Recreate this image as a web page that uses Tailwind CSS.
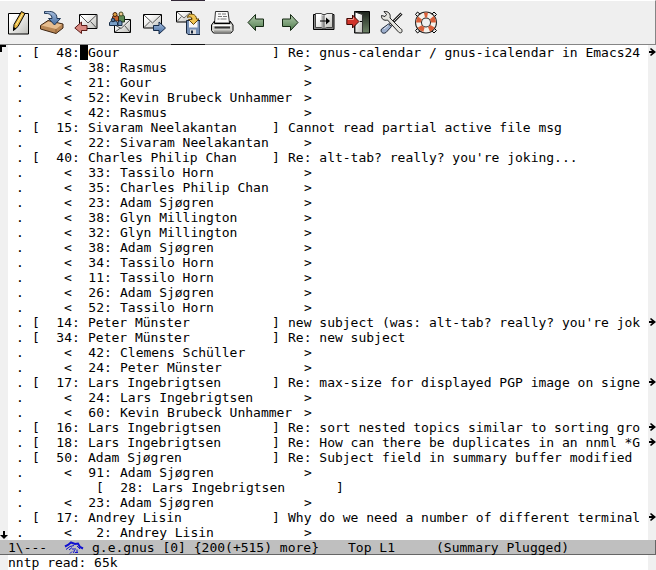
<!DOCTYPE html>
<html lang="en">
<head>
<meta charset="utf-8">
<title>Gnus Summary</title>
<script src="https://cdn.jsdelivr.net/npm/@tailwindcss/browser@4"></script>
</head>
<body class="min-h-screen flex flex-col bg-white text-black text-[13px] leading-[15px] font-['DejaVu_Sans_Mono','Liberation_Mono',monospace] overflow-hidden">

<svg class="absolute size-0" aria-hidden="true">
  <defs>
    <linearGradient id="paper" x1="0" y1="0" x2="1" y2="1"><stop offset="0.2" stop-color="#fff"/><stop offset="1" stop-color="#bdbdb8"/></linearGradient>
    <linearGradient id="green" x1="0" y1="0" x2="0" y2="1"><stop offset="0" stop-color="#b3ccae"/><stop offset="1" stop-color="#4f7b4c"/></linearGradient>
    <linearGradient id="blue" x1="0" y1="0" x2="0" y2="1"><stop offset="0" stop-color="#a9c0e0"/><stop offset="1" stop-color="#426a9e"/></linearGradient>
    <linearGradient id="dark" x1="0" y1="0" x2="0" y2="1"><stop offset="0" stop-color="#1c221c"/><stop offset="1" stop-color="#6f8468"/></linearGradient>
  </defs>
</svg>

<header role="toolbar" aria-label="Mail" class="flex h-[45px] items-stretch border-t border-t-white border-b border-b-[#858585] border-r border-r-[#858585] bg-[#efefef] pl-px">
  <button aria-label="Post" class="w-[34px] flex items-center justify-center">
    <svg width="24" height="24" viewBox="0 0 24 24"><path d="M2.500 2.500h20v20.500h-20z" fill="url(#paper)" stroke="#000"/><path d="M15.500.5l3.500 2L12 15.500l-4.500 4 .5-6z" fill="#e8b640" stroke="#000"/><path d="M16.500 3L10 14" stroke="#fff0a0"/><path d="M7 20l.5-4 3 1.500z" fill="#000"/></svg>
  </button>
  <button aria-label="Get new mail" class="w-[34px] flex items-center justify-center">
    <svg width="24" height="24" viewBox="0 0 24 24"><path d="M.5 14.500L8 9.500l15 3.500v4L16 22.500.5 18z" fill="#b98755" stroke="#3d2512"/><path d="M1.500 14.500L8.500 10.500l13.500 3-6 4.500z" fill="#e6bd8f"/><path d="M16 18v4" stroke="#8b5d35"/><path d="M4.500.5C11-.5 17 1 17 7.500h3.500L14.500 14 8.500 7.500H12C12 3.500 8.500 2 4.500 2.500z" fill="url(#blue)" stroke="#1d3454"/></svg>
  </button>
  <button aria-label="Reply" class="w-[34px] flex items-center justify-center">
    <svg width="24" height="24" viewBox="0 0 24 24"><path d="M5.500 3.500h17.500v14h-17.500z" fill="url(#paper)" stroke="#000"/><path d="M6 4l8 8 8.500-8M22.500 17l-6-6.500" fill="none" stroke="#555"/><path d="M.8 17l6.700-6v3.500H13v5H7.500v3z" fill="#d98880" stroke="#5a1a17"/></svg>
  </button>
  <button aria-label="Reply to all" class="w-[34px] flex items-center justify-center">
    <svg width="24" height="24" viewBox="0 0 24 24"><path d="M6.500 8.500h16v13h-16z" fill="url(#paper)" stroke="#000"/><path d="M7 14l6 3.500L22 9M7 21l5.500-4M22 21l-5-6" fill="none" stroke="#555"/><path d="M10.500 11V6c0-3 6-3 6 0v5z" fill="#5d8a55" stroke="#1e351c"/><circle cx="13" cy="3" r="2" fill="#e9c791" stroke="#424a22"/><path d="M4.500 10V6c0-2 6-2 6 0v4z" fill="#c5622d" stroke="#43200c"/><circle cx="7" cy="3.500" r="2" fill="#e0a040" stroke="#43200c"/><path d="M1.500 14.500v-3l2-1.500h4l2 1.500v3z" fill="#7aa0c8" stroke="#182c46"/><circle cx="5" cy="9" r="1.800" fill="#547599" stroke="#182c46"/><path d="M10 14.500V11l2-1.500 2 1.500v3.500z" fill="#6a8eb5" stroke="#182c46"/></svg>
  </button>
  <button aria-label="Forward" class="w-[34px] flex items-center justify-center">
    <svg width="24" height="24" viewBox="0 0 24 24"><path d="M1.500 3.500h18v13.500h-18z" fill="url(#paper)" stroke="#000"/><path d="M2 4l8.500 8L19 4M2 16.500l6-6" fill="none" stroke="#555"/><path d="M23.500 17l-6.500 6v-3.500h-5.500v-5H17V11z" fill="url(#blue)" stroke="#152a48"/></svg>
  </button>
  <button aria-label="Save" class="w-[34px] -my-px flex items-center justify-center border-y border-b-[#111] border-t-[#332838]">
    <svg width="24" height="24" viewBox="0 0 24 24"><path d="M.5.500h15v10.500H.5z" fill="url(#paper)" stroke="#000"/><path d="M1 1l7 6 7-6M1 10.500l4.500-5" fill="none" stroke="#666"/><path d="M10.500 9.500h13.500v14H12l-1.500-1.500z" fill="#7690b5" stroke="#17263d"/><path d="M13 10h8.500v6.500H13z" fill="#f7f7f7"/><path d="M14 18.500h6v4.500h-6z" fill="#ddd"/><path d="M15 19.500h2v3h-2z" fill="#17263d"/><path d="M11.500 6.500c0-5 9-4.500 9 1.500h2.500L17.500 13.500 12.500 8.500H16c0-3-3-3-4.500-2z" fill="#efc451" stroke="#5e4208"/></svg>
  </button>
  <button aria-label="Print" class="w-[34px] flex items-center justify-center">
    <svg width="24" height="24" viewBox="0 0 24 24"><path d="M5.500.5h12.500l1.500 11.500H4.500z" fill="#fafafa" stroke="#333"/><path d="M8 3h3m1 0h4M8 5.500h4m1 0h4M7.500 8h2m1 0h6" stroke="#777"/><path d="M4.500 10L1.500 14v5.500l2 2.500h17.500l2-2.500V14l-3-4v2.500h-15.500z" fill="#d3d3cf" stroke="#000"/><path d="M3 14.500h18" stroke="#fff"/><path d="M4.500 16.500h15.500" stroke="#333" stroke-width="2"/><path d="M4 20.500h17" stroke="#9b9b97" stroke-width="2"/></svg>
  </button>
  <button aria-label="Previous" class="w-[34px] flex items-center justify-center">
    <svg width="24" height="24" viewBox="0 0 24 24"><path d="M4 11.500L11.500 3.500V8H19.500v7.500h-8V19.500z" fill="url(#green)" stroke="#142813"/></svg>
  </button>
  <button aria-label="Next" class="w-[34px] flex items-center justify-center">
    <svg width="24" height="24" viewBox="0 0 24 24"><path d="M20 11.500L12.500 3.500V8H4.500v7.500h8V19.500z" fill="url(#green)" stroke="#142813"/></svg>
  </button>
  <button aria-label="Catch up" class="w-[34px] flex items-center justify-center">
    <svg width="24" height="24" viewBox="0 0 24 24"><path d="M1.500 3.500h20.500v15h-20.500z" fill="#888" stroke="#000"/><path d="M3.500 2.500h5.500l3 1.500 3-1.500h5.500v14H14.500L12 18l-2.500-1.500h-6z" fill="url(#paper)" stroke="#444"/><path d="M9.500 4v12h2V5z" fill="#aaa"/><path d="M12 4.500v13" stroke="#555"/><path d="M8 10h7" stroke="#000"/><path d="M14 6.500l4 3.500-4 3.500z"/></svg>
  </button>
  <button aria-label="Exit" class="w-[34px] flex items-center justify-center">
    <svg width="24" height="24" viewBox="0 0 24 24"><path d="M8.500.5h15v21.500h-15z" fill="url(#dark)" stroke="#000"/><path d="M9 1l7.500 2.500V22L9 21.500z" fill="url(#paper)" stroke="#333"/><path d="M14 10.500h2" stroke="#000"/><path d="M.8 7.500H6.500v-3.500L13 10.500l-6.500 6.500v-3.500H.8z" fill="#d0342a" stroke="#400905"/><path d="M2 8.500h5.500v-2" fill="none" stroke="#f39a8e"/></svg>
  </button>
  <button aria-label="Customize" class="w-[34px] flex items-center justify-center">
    <svg width="24" height="24" viewBox="0 0 24 24"><path d="M21.500 2.500L10 14" stroke="#222" stroke-width="3"/><path d="M21.500 2.500L10 14" stroke="#ccc"/><path d="M4 .5l2.500 3-1.500 2-3.500-1C1 8 4 10 7.500 9L18 20.500c1.500 2 4 1.500 4 0s0-2.500-1.500-3L10 7C11 3 8.500 0 4 .5z" fill="#e4e4df" stroke="#222"/><path d="M8.500 13l3 2.500L6 21.500c-3 2-6-.5-4.500-3.500z" fill="#9dafcd" stroke="#222b3b"/><path d="M4 18l4-3.500" stroke="#e1e9f5"/></svg>
  </button>
  <button aria-label="Help" class="w-[34px] flex items-center justify-center">
    <svg width="24" height="24" viewBox="0 0 24 24"><path d="M4 6L1.500 3.500l2-2.500L6 3M18 3l2-2 2.500 2.500L20 6M4 17l-2.500 2.500 2 2.500L6 20M18 20l2 2 2.500-2.500L20 17" fill="none" stroke="#000"/><circle cx="12" cy="11.500" r="7.500" fill="none" stroke="#222" stroke-width="7"/><circle cx="12" cy="11.500" r="7.500" fill="none" stroke="#f4f1eb" stroke-width="5"/><g fill="none" stroke="#d9603a" stroke-width="5"><path d="M4.500 11.500a7.500 7.500 0 0 1 1.500-4.500M10.500 4.200a7.500 7.500 0 0 1 3-.1M17.800 6.700a7.500 7.500 0 0 1 1.700 4.800M18.500 15.200a7.500 7.500 0 0 1-3.500 3.200M10 18.700a7.500 7.500 0 0 1-4.300-3.200"/></g></svg>
  </button>
</header>

<main class="relative flex-1 border-x-8 border-[#f0f0f0] bg-white">
  <svg class="absolute -left-2 top-0" width="8" height="8" viewBox="0 0 8 8" aria-hidden="true"><path d="M0 0h6v2H2v5H0z"/></svg>
  <svg class="absolute -left-2 bottom-0" width="8" height="9" viewBox="0 0 8 9" aria-hidden="true"><path d="M3 0h2v4h3L4 8 0 4h3z"/></svg>
  <ul id="threads"></ul>
</main>

<footer>
  <div class="flex h-[15px] items-center whitespace-pre border-b border-r border-[#666] bg-[#bfbfbf] pl-2">
    <span class="w-14 shrink-0">1\---</span>
    <svg class="mr-2 shrink-0" width="20" height="13" viewBox="0 0 20 13" fill="none" stroke="#1010d0" aria-label="Gnus"><path d="M1 5.500l3-1.500L7 1.500 11 3l3-.5L16 6l3 1.500" stroke-width="2"/><path d="M2 8.500l4-3 4-1M5 9l3-2.500M8 8h4M13 5l3 3M6 12.500l2-2M10.500 9l-1 3M13 8.500V12M11 11.500h3" stroke-width="1"/></svg>
    <span class="w-64 shrink-0">g.e.gnus [0] {200(+515) more}</span>
    <span class="w-22 shrink-0">Top L1</span>
    <span>(Summary Plugged)</span>
  </div>
  <p class="h-[15px] whitespace-pre border-x-8 border-[#f0f0f0]">nntp read: 65k</p>
</footer>

<script>
  // [depth, score, author, subject, truncated]
  const threads = [
    [0, 48, "Gour", "Re: gnus-calendar / gnus-icalendar in Emacs24", 1],
    [1, 38, "Rasmus"], [1, 21, "Gour"], [1, 52, "Kevin Brubeck Unhammer"], [1, 42, "Rasmus"],
    [0, 15, "Sivaram Neelakantan", "Cannot read partial active file msg"],
    [1, 22, "Sivaram Neelakantan"],
    [0, 40, "Charles Philip Chan", "Re: alt-tab? really? you're joking..."],
    [1, 33, "Tassilo Horn"], [1, 35, "Charles Philip Chan"], [1, 23, "Adam Sjøgren"],
    [1, 38, "Glyn Millington"], [1, 32, "Glyn Millington"], [1, 38, "Adam Sjøgren"],
    [1, 34, "Tassilo Horn"], [1, 11, "Tassilo Horn"], [1, 26, "Adam Sjøgren"], [1, 52, "Tassilo Horn"],
    [0, 14, "Peter Münster", "new subject (was: alt-tab? really? you're jok", 1],
    [0, 34, "Peter Münster", "Re: new subject"],
    [1, 42, "Clemens Schüller"], [1, 24, "Peter Münster"],
    [0, 17, "Lars Ingebrigtsen", "Re: max-size for displayed PGP image on signe", 1],
    [1, 24, "Lars Ingebrigtsen"], [1, 60, "Kevin Brubeck Unhammer"],
    [0, 16, "Lars Ingebrigtsen", "Re: sort nested topics similar to sorting gro", 1],
    [0, 18, "Lars Ingebrigtsen", "Re: How can there be duplicates in an nnml *G", 1],
    [0, 50, "Adam Sjøgren", "Re: Subject field in summary buffer modified"],
    [1, 91, "Adam Sjøgren"],
    [2, 28, "Lars Ingebrigtsen", ""],
    [1, 23, "Adam Sjøgren"],
    [0, 17, "Andrey Lisin", "Why do we need a number of different terminal", 1],
    [1, 2, "Andrey Lisin"],
  ];
  const indent = ["w-4", "w-12", "w-20"];
  document.getElementById("threads").innerHTML = threads.map(([depth, score, author, subject, cut], i) => {
    const open = subject === undefined ? "&lt;" : "[";
    const close = subject === undefined ? "&gt;" : "]";
    return `<li class="relative flex h-[15px] whitespace-pre pl-2">
      <span class="${indent[depth]} shrink-0">.</span>
      <span class="w-2 shrink-0">${open}</span>
      <span class="w-8 shrink-0 text-right">${score}</span>
      <span class="w-2 shrink-0">:</span>
      <span class="w-2 shrink-0 ${i ? "" : "bg-black"}"></span>
      <span class="w-46 shrink-0">${author}</span>
      <span class="w-4 shrink-0">${close}</span>
      <span>${subject || ""}</span>
      ${cut ? '<svg class="absolute -right-2 top-[3px]" width="8" height="8" viewBox="0 0 8 8" aria-hidden="true"><path d="M1 3h3L2 1l1-1 5 4-5 4-1-1 2-2H1z"/></svg>' : ""}
    </li>`;
  }).join("");
</script>
</body>
</html>
